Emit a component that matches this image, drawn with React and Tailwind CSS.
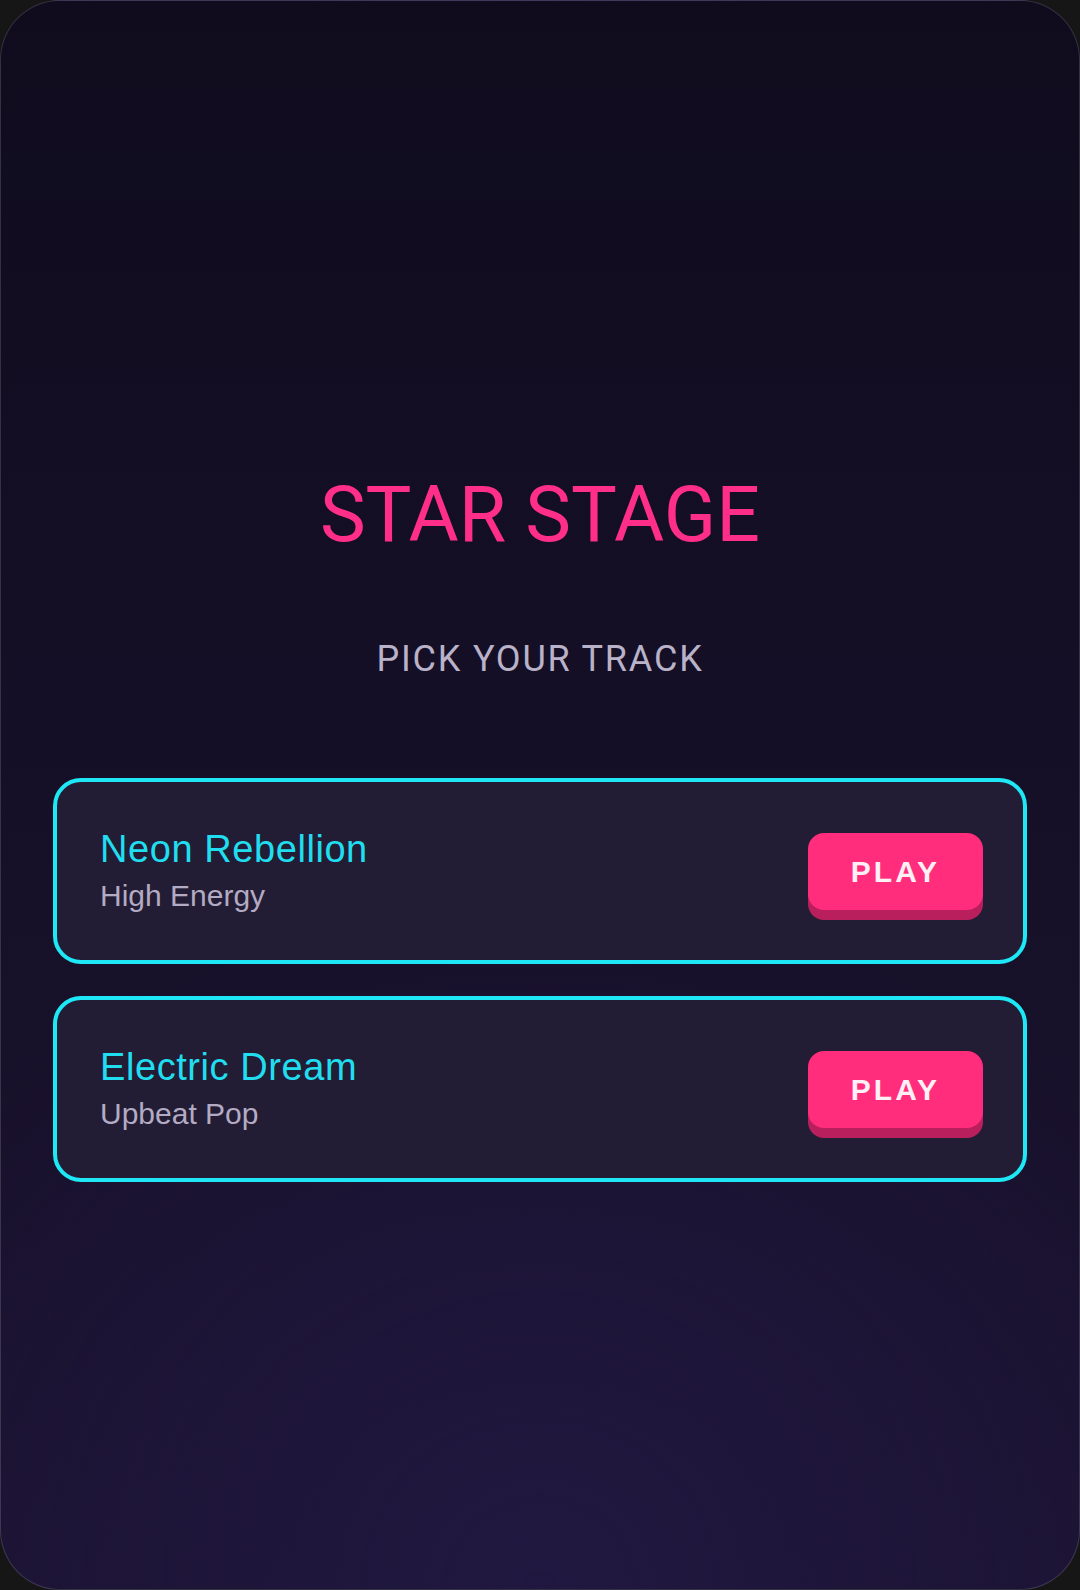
import React from 'react';

const tracks = [
  { id: 1, title: 'Neon Rebellion', vibe: 'High Energy' },
  { id: 2, title: 'Electric Dream', vibe: 'Upbeat Pop' },
];

const TrackCard = ({ track }) => {
  return (
    <div className="h-[186px] rounded-[28px] border-4 border-[#1ee8f6] bg-[#221d34] pl-[43px] pr-10 flex items-center justify-between">
      <div className="flex flex-col -mt-[2px]">
        <span className="text-[38px] leading-[46px] tracking-[0.015em] text-[#20ddf0]">{track.title}</span>
        <span className="mt-[6px] text-[30px] leading-[36px] text-[#b3abc3]">{track.vibe}</span>
      </div>
      {/* 3d-ish button, the darker shadow is the "side" */}
      <button className="w-[175px] h-[77px] rounded-[16px] bg-[#ff2d7b] shadow-[0_10px_0_#b81f5c] text-[30px] font-bold tracking-[0.1em] text-[#fff0f6] flex items-center justify-center">
        PLAY
      </button>
    </div>
  );
};

const App = () => {
  return (
    <div className="w-[1080px] h-[1590px] bg-[#161616] font-['Liberation_Sans',Arial,sans-serif]">
      <div className="h-full rounded-[60px] border border-white/15 overflow-hidden bg-[radial-gradient(ellipse_70%_45%_at_50%_100%,#201840_0%,transparent_100%),linear-gradient(to_bottom,#100c1e_0%,#140f25_40%,#1b1331_100%)]">
        <div className="flex flex-col items-center pt-[476px] px-[52px]">
          <h1 className="font-['Roboto',sans-serif] text-[77px] leading-none text-[#ff2e88]">STAR STAGE</h1>
          <p className="mt-[87px] font-['Roboto',sans-serif] text-[36px] leading-none tracking-[0.05em] text-[#b9b2c9]">PICK YOUR TRACK</p>

          {/* track list */}
          <div className="mt-[101px] w-full flex flex-col gap-[32px]">
            {tracks.map((track) => (
              <TrackCard key={track.id} track={track} />
            ))}
          </div>
        </div>
      </div>
    </div>
  );
};

export default App;
